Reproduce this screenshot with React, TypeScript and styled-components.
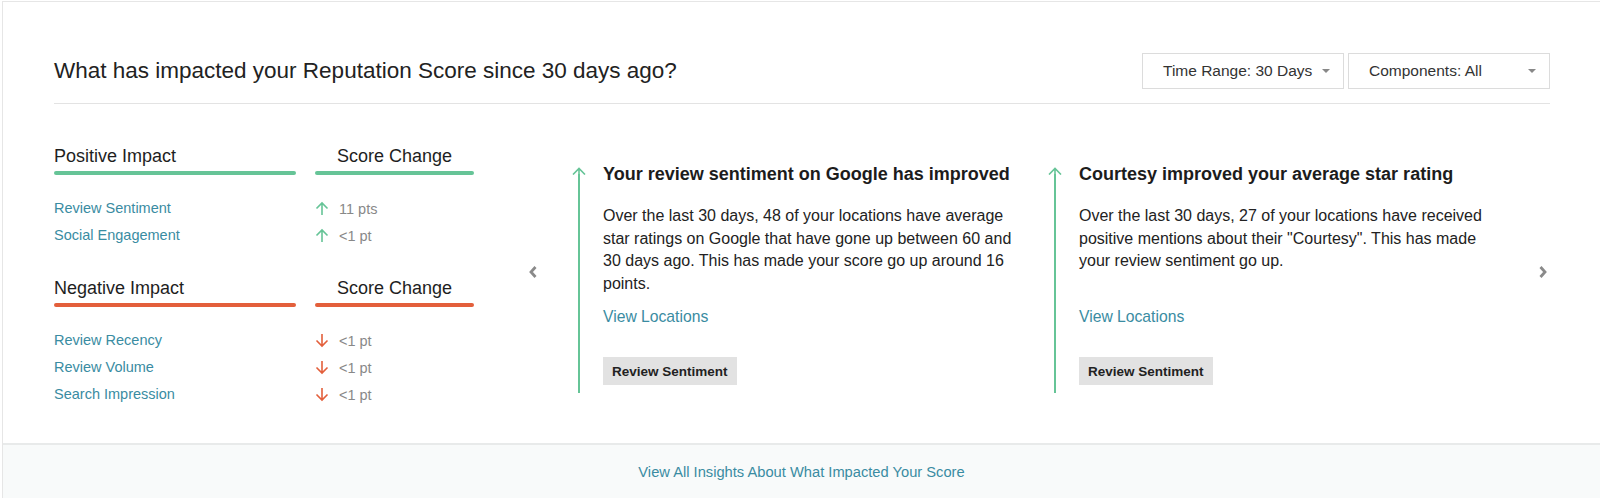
import React from 'react';
import styled, { createGlobalStyle } from 'styled-components';

const GREEN = '#66c497';
const ORANGE = '#e35f3b';
const TEAL = '#3a8ca2';

const GlobalStyle = createGlobalStyle`
  html, body {
    margin: 0;
    padding: 0;
    background: #ffffff;
    overflow: hidden;
  }
  body {
    font-family: "Liberation Sans", Arial, Helvetica, sans-serif;
    color: #222;
  }
`;

const Page = styled.div`
  padding: 1px 0 0 2px;
`;

const Card = styled.section`
  border: 1px solid #e6e6e6;
  border-right: none;
  background: #fff;
`;

const Main = styled.div`
  padding: 0 50px 35px 51px;
`;

const Header = styled.div`
  display: flex;
  align-items: center;
  justify-content: space-between;
  padding: 51px 0 14px;
  border-bottom: 1px solid #e3e3e3;
`;

const Title = styled.h2`
  margin: 0;
  font-size: 22.5px;
  font-weight: 400;
  color: #222;
`;

const Filters = styled.div`
  display: flex;
  gap: 4px;
`;

const Dropdown = styled.button`
  width: 202px;
  height: 36px;
  box-sizing: border-box;
  display: flex;
  align-items: center;
  justify-content: space-between;
  padding: 0 13px 0 20px;
  border: 1px solid #dcdcdc;
  background: #fff;
  font-family: inherit;
  font-size: 15.5px;
  color: #333;
  cursor: pointer;
`;

const Caret = styled.span`
  width: 0;
  height: 0;
  border-left: 4px solid transparent;
  border-right: 4px solid transparent;
  border-top: 4px solid #888;
`;

const Body = styled.div`
  display: flex;
  align-items: flex-start;
  padding-top: 41px;
`;

const ImpactPanel = styled.div`
  width: 420px;
  flex-shrink: 0;
  display: flex;
  flex-direction: column;
`;

const ImpactGroup = styled.div<{ $first?: boolean }>`
  display: grid;
  grid-template-columns: 242px 159px;
  column-gap: 19px;
  margin-top: ${(p) => (p.$first ? '0' : '28px')};
`;

const HeaderCell = styled.div<{ $center?: boolean }>`
  font-size: 18px;
  line-height: 22px;
  color: #1e1e1e;
  text-align: ${(p) => (p.$center ? 'center' : 'left')};
  margin-bottom: 20px;
`;

const Underline = styled.div<{ $color: string }>`
  height: 4px;
  border-radius: 2px;
  background: ${(p) => p.$color};
  margin-top: 4px;
`;

const FactorLink = styled.a`
  font-size: 14.5px;
  line-height: 27px;
  color: ${TEAL};
  text-decoration: none;
  cursor: pointer;
`;

const ValueCell = styled.div`
  display: flex;
  align-items: center;
  gap: 10px;
  height: 27px;
  font-size: 14.5px;
  color: #888;
`;

const Carousel = styled.div`
  display: flex;
  align-items: flex-start;
  margin-left: 47px;
  margin-top: 19px;
`;

const NavButton = styled.button<{ $gap: number }>`
  width: 24px;
  height: 16px;
  padding: 0;
  border: none;
  background: none;
  display: flex;
  align-items: center;
  justify-content: center;
  margin-top: 100px;
  margin-right: ${(p) => (p.$gap < 0 ? 0 : p.$gap)}px;
  margin-left: ${(p) => (p.$gap < 0 ? -p.$gap : 0)}px;
  cursor: pointer;
`;

const Insight = styled.article`
  width: 476px;
  display: flex;
  flex-shrink: 0;
`;

const Rail = styled.div`
  width: 14px;
  display: flex;
  flex-direction: column;
  align-items: center;
  padding-top: 3px;
`;

const Stem = styled.div`
  flex: 1;
  width: 2px;
  margin-top: -1px;
  background: ${GREEN};
`;

const InsightContent = styled.div`
  display: flex;
  flex-direction: column;
  align-items: flex-start;
  padding: 0 0 8px 17px;
  max-width: 412px;
`;

const InsightTitle = styled.h3`
  margin: 0;
  font-size: 18px;
  line-height: 20px;
  font-weight: 700;
  color: #1c1c1c;
  white-space: nowrap;
`;

const InsightText = styled.p`
  margin: 21px 0 0;
  min-height: 91px;
  font-size: 16px;
  line-height: 22.7px;
  color: #222;
`;

const ViewLink = styled.a`
  margin-top: 11px;
  font-size: 15.7px;
  line-height: 20px;
  color: ${TEAL};
  text-decoration: none;
  cursor: pointer;
`;

const Tag = styled.span`
  margin-top: 30px;
  height: 28px;
  display: inline-flex;
  align-items: center;
  padding: 0 9px;
  background: #e2e2e2;
  font-size: 13.5px;
  font-weight: 700;
  color: #222;
`;

const Footer = styled.div`
  height: 54px;
  border-top: 2px solid #e8eaea;
  background: #f8fafa;
  display: flex;
  align-items: center;
  justify-content: center;
`;

const FooterLink = styled.a`
  font-size: 14.7px;
  color: ${TEAL};
  text-decoration: none;
  cursor: pointer;
`;

const Arrow = ({ up }: { up: boolean }) => (
  <svg width="14" height="15" viewBox="0 0 14 15" fill="none">
    {up ? (
      <path d="M7 14V2M1.5 7.5L7 2l5.5 5.5" stroke={GREEN} strokeWidth="1.6" />
    ) : (
      <path d="M7 1v12M1.5 7.5L7 13l5.5-5.5" stroke={ORANGE} strokeWidth="1.6" />
    )}
  </svg>
);

const Chevron = ({ dir }: { dir: 'left' | 'right' }) => (
  <svg width="10" height="14" viewBox="0 0 10 14" fill="none">
    <path
      d={dir === 'left' ? 'M7.5 2L3 7l4.5 5' : 'M2.5 2L7 7l-4.5 5'}
      stroke="#8a8a8a"
      strokeWidth="2.8"
    />
  </svg>
);

type Factor = { name: string; value: string };

const positive: Factor[] = [
  { name: 'Review Sentiment', value: '11 pts' },
  { name: 'Social Engagement', value: '<1 pt' },
];

const negative: Factor[] = [
  { name: 'Review Recency', value: '<1 pt' },
  { name: 'Review Volume', value: '<1 pt' },
  { name: 'Search Impression', value: '<1 pt' },
];

const insights = [
  {
    title: 'Your review sentiment on Google has improved',
    text: 'Over the last 30 days, 48 of your locations have average star ratings on Google that have gone up between 60 and 30 days ago. This has made your score go up around 16 points.',
    tag: 'Review Sentiment',
  },
  {
    title: 'Courtesy improved your average star rating',
    text: 'Over the last 30 days, 27 of your locations have received positive mentions about their "Courtesy". This has made your review sentiment go up.',
    tag: 'Review Sentiment',
  },
];

function Group({ label, color, up, items, first }: { label: string; color: string; up: boolean; items: Factor[]; first?: boolean }) {
  return (
    <ImpactGroup $first={first}>
      <HeaderCell>
        {label}
        <Underline $color={color} />
      </HeaderCell>
      <HeaderCell $center>
        Score Change
        <Underline $color={color} />
      </HeaderCell>
      {items.map((f) => (
        <React.Fragment key={f.name}>
          <FactorLink>{f.name}</FactorLink>
          <ValueCell>
            <Arrow up={up} />
            {f.value}
          </ValueCell>
        </React.Fragment>
      ))}
    </ImpactGroup>
  );
}

export default function App() {
  return (
    <Page>
      <GlobalStyle />
      <Card>
        <Main>
          <Header>
            <Title>What has impacted your Reputation Score since 30 days ago?</Title>
            <Filters>
              <Dropdown>
                Time Range: 30 Days
                <Caret />
              </Dropdown>
              <Dropdown>
                Components: All
                <Caret />
              </Dropdown>
            </Filters>
          </Header>

          <Body>
            <ImpactPanel>
              <Group label="Positive Impact" color={GREEN} up items={positive} first />
              <Group label="Negative Impact" color={ORANGE} up={false} items={negative} />
            </ImpactPanel>

            <Carousel>
              <NavButton $gap={27} aria-label="Previous">
                <Chevron dir="left" />
              </NavButton>
              {insights.map((item) => (
                <Insight key={item.title}>
                  <Rail>
                    <svg width="14" height="8" viewBox="0 0 14 8" fill="none">
                      <path d="M1 7.5L7 1.5l6 6M7 1.5V8" stroke={GREEN} strokeWidth="1.6" />
                    </svg>
                    <Stem />
                  </Rail>
                  <InsightContent>
                    <InsightTitle>{item.title}</InsightTitle>
                    <InsightText>{item.text}</InsightText>
                    <ViewLink>View Locations</ViewLink>
                    <Tag>{item.tag}</Tag>
                  </InsightContent>
                </Insight>
              ))}
              <NavButton $gap={-7} aria-label="Next">
                <Chevron dir="right" />
              </NavButton>
            </Carousel>
          </Body>
        </Main>
        <Footer>
          <FooterLink>View All Insights About What Impacted Your Score</FooterLink>
        </Footer>
      </Card>
    </Page>
  );
}
